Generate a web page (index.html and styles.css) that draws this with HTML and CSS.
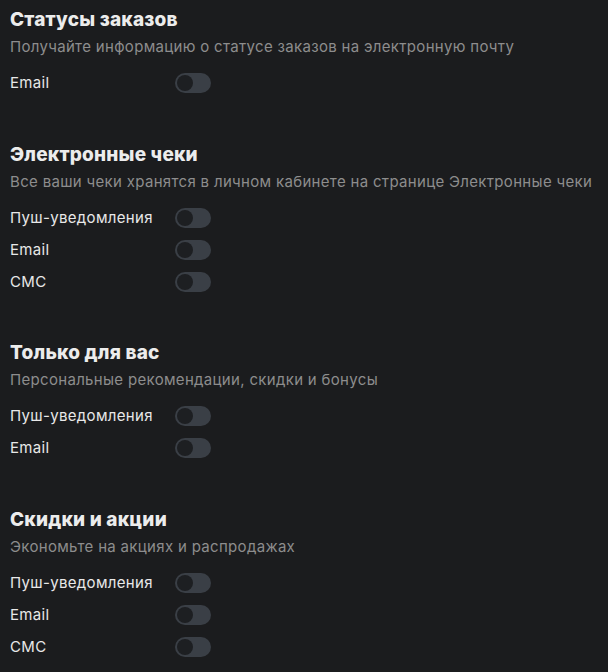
FILE: index.html
```html
<!DOCTYPE html>
<html lang="ru">
<head>
<meta charset="utf-8">
<link rel="stylesheet" href="styles.css">
</head>
<body>
<main class="page">
  <section class="group">
    <h2 class="title">Статусы заказов</h2>
    <p class="desc">Получайте информацию о статусе заказов на электронную почту</p>
    <div class="row"><span class="label">Email</span><span class="toggle"><span class="knob"></span></span></div>
  </section>
  <section class="group">
    <h2 class="title">Электронные чеки</h2>
    <p class="desc">Все ваши чеки хранятся в личном кабинете на странице Электронные чеки</p>
    <div class="row"><span class="label">Пуш-уведомления</span><span class="toggle"><span class="knob"></span></span></div>
    <div class="row"><span class="label">Email</span><span class="toggle"><span class="knob"></span></span></div>
    <div class="row"><span class="label">СМС</span><span class="toggle"><span class="knob"></span></span></div>
  </section>
  <section class="group">
    <h2 class="title">Только для вас</h2>
    <p class="desc">Персональные рекомендации, скидки и бонусы</p>
    <div class="row"><span class="label">Пуш-уведомления</span><span class="toggle"><span class="knob"></span></span></div>
    <div class="row"><span class="label">Email</span><span class="toggle"><span class="knob"></span></span></div>
  </section>
  <section class="group">
    <h2 class="title">Скидки и акции</h2>
    <p class="desc">Экономьте на акциях и распродажах</p>
    <div class="row"><span class="label">Пуш-уведомления</span><span class="toggle"><span class="knob"></span></span></div>
    <div class="row"><span class="label">Email</span><span class="toggle"><span class="knob"></span></span></div>
    <div class="row"><span class="label">СМС</span><span class="toggle"><span class="knob"></span></span></div>
  </section>
</main>
</body>
</html>
```
FILE: styles.css
```css
html, body {
  margin: 0;
  padding: 0;
  background: #1b1c1e;
}
body {
  font-family: Inter, "Noto Sans", sans-serif;
  color: #e6e6e6;
}
.page {
  padding: 8px 0 0 10px;
  display: flex;
  flex-direction: column;
  gap: 43.5px;
}
.group {
  display: flex;
  flex-direction: column;
}
.title {
  margin: 0;
  font-size: 19px;
  line-height: 24px;
  font-weight: 800;
  letter-spacing: 0.2px;
  color: #ececec;
}
.desc {
  margin: 5px 0 10px;
  font-size: 15px;
  line-height: 20px;
  letter-spacing: 0.32px;
  color: #8d8d8d;
}
.row {
  display: flex;
  align-items: center;
  height: 32px;
}
.label {
  width: 165px;
  font-size: 15px;
  line-height: 20px;
  letter-spacing: 0.33px;
  color: #e8e8e8;
}
.toggle {
  width: 36px;
  height: 20px;
  border-radius: 10px;
  background: #3a3f46;
  display: flex;
  align-items: center;
  padding-left: 2px;
  box-sizing: border-box;
}
.knob {
  width: 16px;
  height: 16px;
  border-radius: 50%;
  background: #1d1f22;
}
```
